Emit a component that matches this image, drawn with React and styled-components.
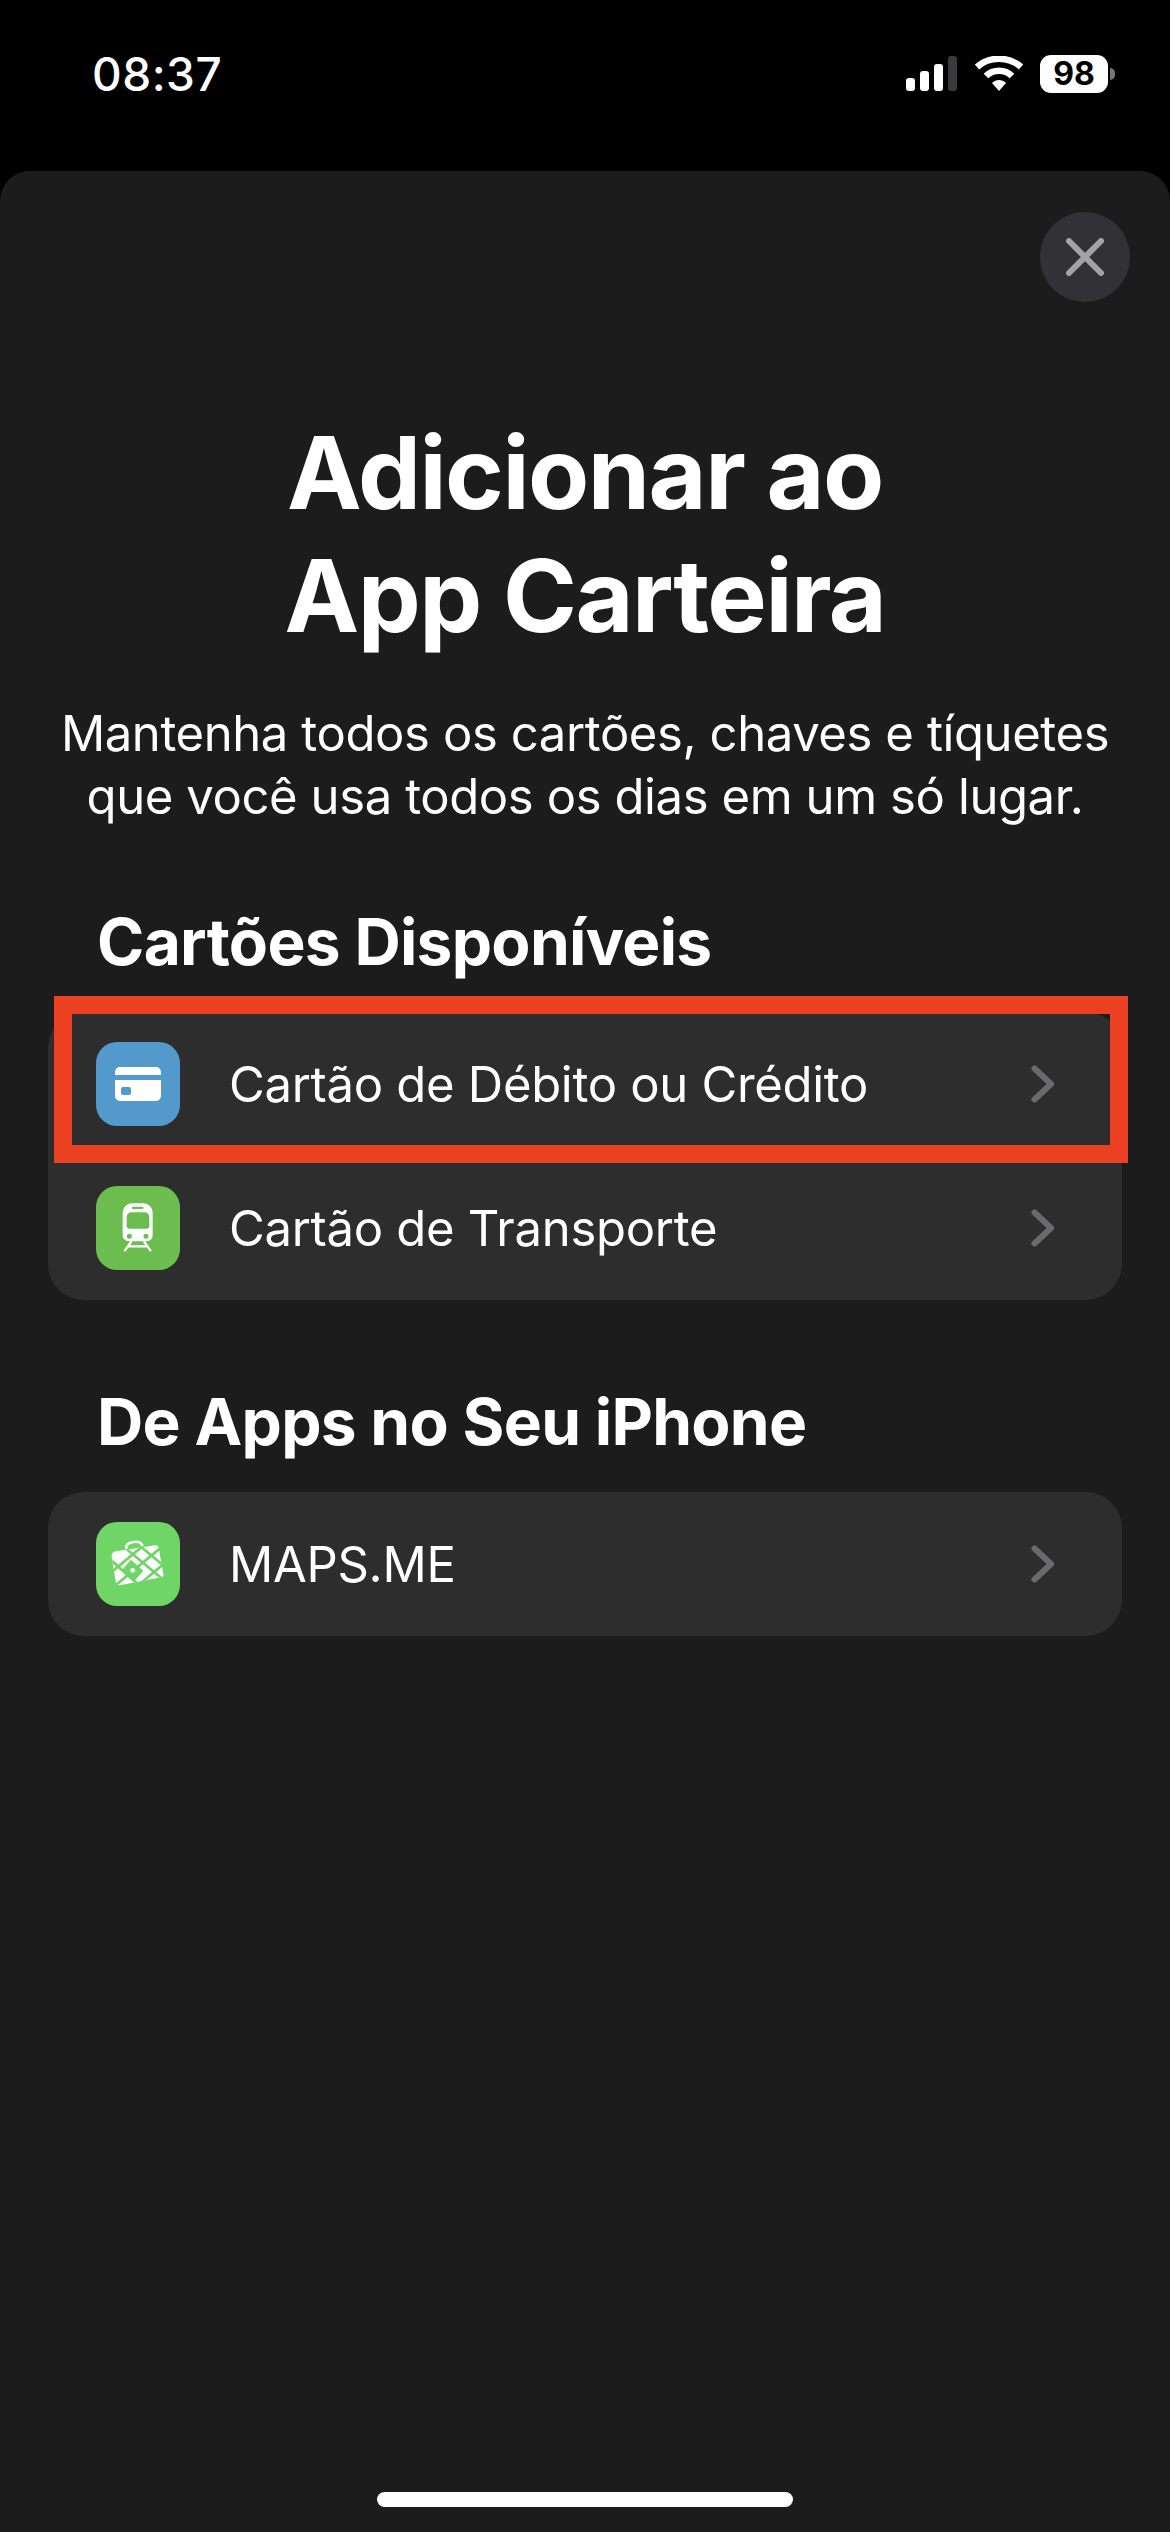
import React from "react";
import styled, { createGlobalStyle } from "styled-components";

const Global = createGlobalStyle`
  html, body { margin: 0; padding: 0; background: #000; }
  * { box-sizing: border-box; }
  body { font-family: Inter, "Liberation Sans", sans-serif; -webkit-font-smoothing: antialiased; }
`;

const Page = styled.div`
  width: 1170px;
  height: 2532px;
  background: #000;
  display: flex;
  flex-direction: column;
  overflow: hidden;
`;

const StatusBar = styled.header`
  height: 171px;
  flex: none;
  padding: 47px 54px 0 92px;
  display: flex;
  justify-content: space-between;
  align-items: flex-start;
`;

const Time = styled.span`
  color: #fff;
  font-size: 46px;
  line-height: 54px;
  font-weight: 500;
  letter-spacing: 0.5px;
`;

const StatusIcons = styled.div`
  display: flex;
  align-items: center;
  gap: 16px;
  padding-top: 8px;
`;

const Battery = styled.div`
  position: relative;
  width: 68px;
  height: 38px;
  border-radius: 11px;
  background: #fff;
  color: #000;
  font-size: 32px;
  font-weight: 700;
  line-height: 38px;
  text-align: center;
  margin-right: 8px;
  &::after {
    content: "";
    position: absolute;
    left: 70px;
    top: 13px;
    width: 5px;
    height: 12px;
    border-radius: 0 6px 6px 0;
    background: #77777a;
  }
`;

const Sheet = styled.main`
  flex: 1;
  background: #1c1c1c;
  border-radius: 30px 30px 0 0;
  padding: 41px 48px 25px;
  display: flex;
  flex-direction: column;
`;

const CloseRow = styled.div`
  display: flex;
  justify-content: flex-end;
  margin-right: -8px;
`;

const CloseButton = styled.button`
  width: 90px;
  height: 90px;
  border: 0;
  padding: 0;
  border-radius: 50%;
  background: #323236;
  display: flex;
  align-items: center;
  justify-content: center;
`;

const Title = styled.h1`
  margin: 109px 0 0;
  color: #fff;
  font-size: 100px;
  line-height: 123px;
  font-weight: 700;
  letter-spacing: -1.5px;
  text-align: center;
`;

const Subtitle = styled.p`
  margin: 45px -30px 0;
  color: #fff;
  font-size: 49px;
  line-height: 63px;
  font-weight: 400;
  letter-spacing: -0.4px;
  text-align: center;
`;

const SectionTitle = styled.h2`
  margin: ${(p) => p.$top}px 0 0 49px;
  color: #fff;
  font-size: 64px;
  line-height: 72px;
  font-weight: 700;
  letter-spacing: -0.7px;
`;

const Card = styled.section`
  margin-top: ${(p) => p.$top}px;
  background: #2d2d2d;
  border-radius: 36px;
  display: flex;
  flex-direction: column;
`;

const Row = styled.div`
  position: relative;
  height: 144px;
  padding: 0 67px 0 48px;
  display: flex;
  align-items: center;
`;

const IconTile = styled.div`
  width: 84px;
  height: 84px;
  flex: none;
  border-radius: 21px;
  background: ${(p) => p.$bg};
  display: flex;
  align-items: center;
  justify-content: center;
`;

const RowLabel = styled.span`
  margin-left: 49px;
  flex: 1;
  color: #fff;
  font-size: 49px;
  font-weight: 400;
  letter-spacing: -0.3px;
`;

const Highlight = styled.div`
  position: absolute;
  left: 6px;
  right: -6px;
  top: -16px;
  bottom: -7px;
  border: 18px solid #ec4023;
  pointer-events: none;
`;

const Spacer = styled.div`
  flex: 1;
`;

const HomeIndicator = styled.div`
  width: 416px;
  height: 15px;
  border-radius: 8px;
  background: #fff;
  align-self: center;
`;

const Chevron = () => (
  <svg width="24" height="38" viewBox="0 0 24 38" fill="none">
    <path d="M3.5 3.5 L20 19 L3.5 34.5" stroke="#6b6b6d" strokeWidth="6" strokeLinecap="round" strokeLinejoin="round" />
  </svg>
);

const CardIcon = () => (
  <svg width="46" height="34" viewBox="0 0 46 34">
    <path d="M5 0h36a5 5 0 0 1 5 5v3H0V5a5 5 0 0 1 5-5z" fill="#fff" />
    <path fillRule="evenodd" d="M0 13h46v16a5 5 0 0 1-5 5H5a5 5 0 0 1-5-5z M8 20a2 2 0 0 0-2 2v4a2 2 0 0 0 2 2h6a2 2 0 0 0 2-2v-4a2 2 0 0 0-2-2z" fill="#fff" />
  </svg>
);

const TrainIcon = () => (
  <svg width="84" height="84" viewBox="0 0 252 252">
    <path
      fillRule="evenodd"
      fill="#fff"
      d="M108 52h34a28 28 0 0 1 28 28v68a18 18 0 0 1-18 18H98a18 18 0 0 1-18-18V80a28 28 0 0 1 28-28z
         M111 62a3.500 3.500 0 0 0 0 7h28a3.500 3.500 0 0 0 0-7z
         M106 79a14 14 0 0 0-14 14v26a9 9 0 0 0 9 9h50a9 9 0 0 0 9-9V93a14 14 0 0 0-14-14z
         M100 143a7.500 7.500 0 1 0 0 15 7.500 7.500 0 0 0 0-15z
         M150 143a7.500 7.500 0 1 0 0 15 7.500 7.500 0 0 0 0-15z"
    />
    <path d="M105 168 L87 193 M145 168 L163 193 M98 181h54" stroke="#fff" strokeWidth="7" strokeLinecap="round" fill="none" />
  </svg>
);

const MapsIcon = () => (
  <svg width="84" height="84" viewBox="0 0 252 252">
    <defs>
      <clipPath id="suitcase">
        <path d="M60 88 L178 70 Q186 69 188 78 L202 155 Q204 164 195 166 L72 190 Q62 191 60 183 L47 105 Q46 90 60 88Z" />
      </clipPath>
    </defs>
    <path d="M91 80 Q88 64 112 60 Q134 56 140 72" stroke="#fff" strokeWidth="8" fill="none" />
    <path d="M60 88 L178 70 Q186 69 188 78 L202 155 Q204 164 195 166 L72 190 Q62 191 60 183 L47 105 Q46 90 60 88Z" fill="#fff" />
    <g clipPath="url(#suitcase)">
      <g stroke="#6fd566" strokeWidth="8">
        <path d="M85 76 L210 180 M120 62 L215 141 M40 110 L135 195" />
        <path d="M155 60 L40 156 M205 68 L55 193 M210 120 L125 191" />
      </g>
      <path d="M105 113 L142 146 L115 177 L78 144 Z" fill="#6fd566" />
      <circle cx="110" cy="145" r="7" fill="#fff" />
    </g>
  </svg>
);

const items1 = [
  { label: "Cartão de Débito ou Crédito", bg: "#5499cb", icon: <CardIcon />, marked: true },
  { label: "Cartão de Transporte", bg: "#6cbd50", icon: <TrainIcon /> },
];
const items2 = [{ label: "MAPS.ME", bg: "#6fd566", icon: <MapsIcon /> }];

const renderRow = (it) => (
  <Row key={it.label}>
    <IconTile $bg={it.bg}>{it.icon}</IconTile>
    <RowLabel>{it.label}</RowLabel>
    <Chevron />
    {it.marked && <Highlight />}
  </Row>
);

export default function App() {
  return (
    <Page>
      <Global />
      <StatusBar>
        <Time>08:37</Time>
        <StatusIcons>
          <svg width="52" height="36" viewBox="0 0 52 36">
            <rect x="0" y="22" width="9" height="13" rx="3" fill="#fff" />
            <rect x="14" y="15" width="9" height="20" rx="3" fill="#fff" />
            <rect x="28" y="8" width="9" height="27" rx="3" fill="#fff" />
            <rect x="42" y="0" width="9" height="35" rx="3" fill="#3a3a3c" />
          </svg>
          <svg width="50" height="36" viewBox="0 0 50 36">
            <path d="M3 11 C15 0 35 0 47 11" stroke="#fff" strokeWidth="6.500" fill="none" strokeLinecap="butt" />
            <path d="M12 20 C19 13 31 13 38 20" stroke="#fff" strokeWidth="6.500" fill="none" />
            <path d="M18 27 C22 23 28 23 32 27 L25 35 Z" fill="#fff" />
          </svg>
          <Battery>98</Battery>
        </StatusIcons>
      </StatusBar>
      <Sheet>
        <CloseRow>
          <CloseButton aria-label="Fechar">
            <svg width="38" height="38" viewBox="0 0 38 38">
              <path d="M3 3 L35 35 M35 3 L3 35" stroke="#a2a2a8" strokeWidth="6" strokeLinecap="round" />
            </svg>
          </CloseButton>
        </CloseRow>
        <Title>
          Adicionar ao
          <br />
          App Carteira
        </Title>
        <Subtitle>
          Mantenha todos os cartões, chaves e tíquetes
          <br />
          que você usa todos os dias em um só lugar.
        </Subtitle>
        <SectionTitle $top={78}>Cartões Disponíveis</SectionTitle>
        <Card $top={34}>{items1.map(renderRow)}</Card>
        <SectionTitle $top={86}>De Apps no Seu iPhone</SectionTitle>
        <Card $top={34}>{items2.map(renderRow)}</Card>
        <Spacer />
        <HomeIndicator />
      </Sheet>
    </Page>
  );
}
